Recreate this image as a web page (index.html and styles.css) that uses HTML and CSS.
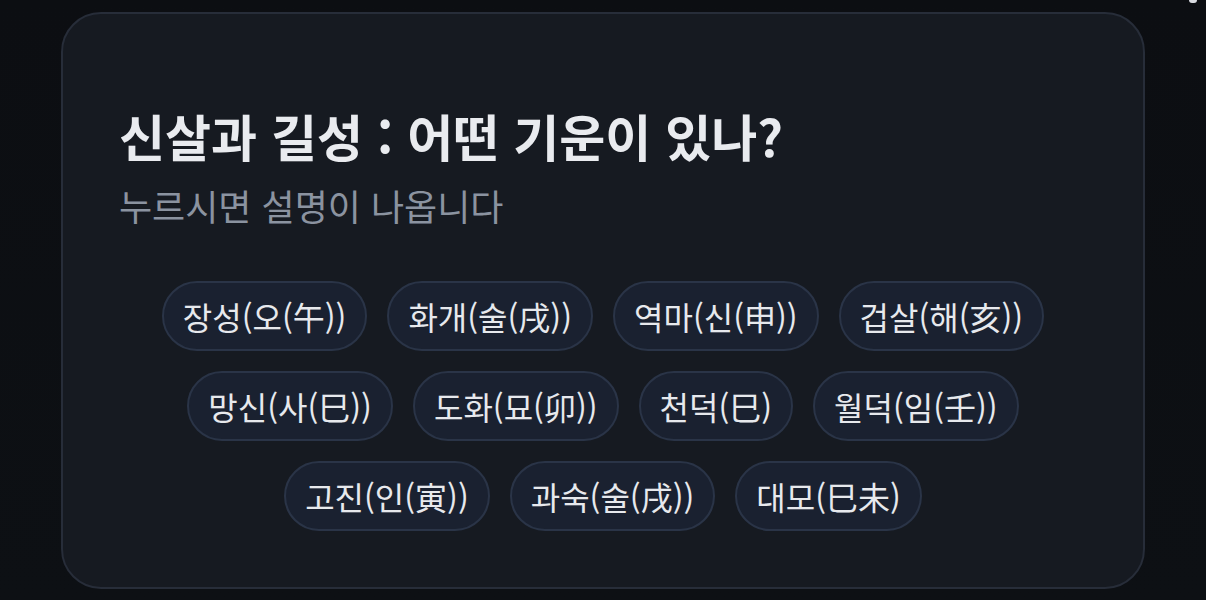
FILE: index.html
```html
<!DOCTYPE html>
<html lang="ko">
<head>
<meta charset="utf-8">
<link rel="stylesheet" href="styles.css">
</head>
<body>
<div class="page">
  <section class="card">
    <h1 class="title">신살과 길성 : 어떤 기운이 있나?</h1>
    <p class="subtitle">누르시면 설명이 나옵니다</p>
    <div class="chips">
      <button class="chip">장성(오(午))</button>
      <button class="chip">화개(술(戌))</button>
      <button class="chip">역마(신(申))</button>
      <button class="chip">겁살(해(亥))</button>
      <button class="chip">망신(사(巳))</button>
      <button class="chip">도화(묘(卯))</button>
      <button class="chip">천덕(巳)</button>
      <button class="chip">월덕(임(壬))</button>
      <button class="chip">고진(인(寅))</button>
      <button class="chip">과숙(술(戌))</button>
      <button class="chip">대모(巳未)</button>
    </div>
  </section>
  <span class="dot"></span>
</div>
</body>
</html>
```
FILE: styles.css
```css
html, body {
  margin: 0;
  padding: 0;
  background: #0c0e12;
}
body {
  font-family: "Noto Sans CJK KR", "Noto Sans", sans-serif;
  width: 1206px;
  height: 600px;
  overflow: hidden;
}
.page {
  position: relative;
  height: 600px;
  padding: 12px 61px 0;
  box-sizing: border-box;
  background: linear-gradient(180deg, #0c0e12 0%, #0d1014 100%);
}
.card {
  height: 577px;
  box-sizing: border-box;
  border: 2px solid #272d39;
  border-radius: 40px;
  background: #161a21;
  padding: 91px 56px 0;
}
.title {
  margin: 0;
  font-size: 50px;
  font-weight: 700;
  line-height: 60px;
  color: #e9ebef;
  letter-spacing: 0;
}
.subtitle {
  margin: 18px 0 0;
  font-size: 36px;
  font-weight: 400;
  line-height: 44px;
  color: #8b93a0;
}
.chips {
  margin-top: 54px;
  display: flex;
  flex-wrap: wrap;
  justify-content: center;
  gap: 20px 20px;
}
.chip {
  height: 70px;
  box-sizing: border-box;
  padding: 0 19px;
  border: 2px solid #2a3447;
  border-radius: 35px;
  background: #1a2130;
  color: #e7e9ed;
  font-family: "Noto Sans CJK KR", "Noto Sans", sans-serif;
  font-size: 32px;
  font-weight: 400;
}
.dot {
  position: absolute;
  top: -3px;
  left: 1189px;
  width: 8px;
  height: 6px;
  border-radius: 4px;
  background: #d9dbe0;
}
```
